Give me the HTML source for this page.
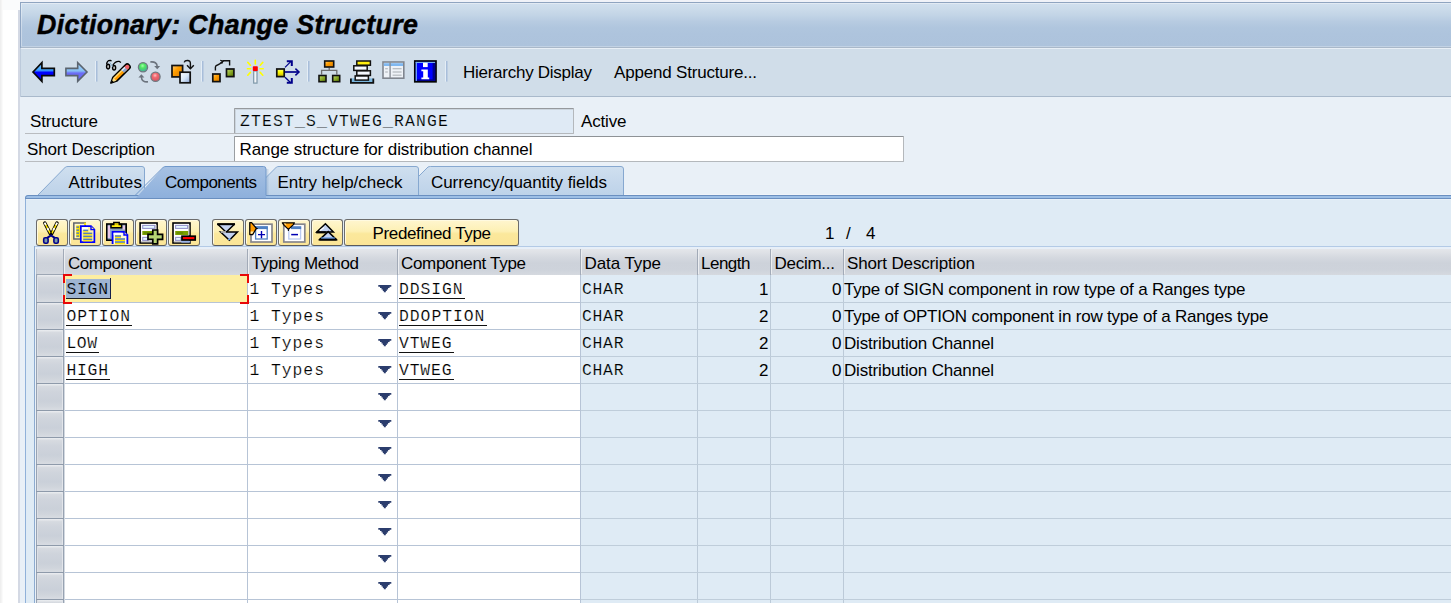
<!DOCTYPE html>
<html lang="en"><head><meta charset="utf-8"><title>Dictionary: Change Structure</title>
<style>
html,body{margin:0;padding:0;background:#fff;}
body{width:1451px;height:603px;position:relative;overflow:hidden;font-family:"Liberation Sans",sans-serif;}
#app div,#app span,#app svg.ov{position:absolute;}
#app{position:absolute;left:0;top:0;width:1451px;height:603px;overflow:hidden;}
svg.ov{left:0;top:0;pointer-events:none;}
.grp{left:0;top:0;width:0;height:0;}
span{white-space:pre;color:#000;}
.s{font-family:"Liberation Sans",sans-serif;}
.m{font-family:"Liberation Mono",monospace;}
.btn{box-sizing:border-box;border:1px solid #6c6c6c;border-bottom-color:#5a5a5c;border-radius:3px;background:linear-gradient(to bottom,#fff6cf 0%,#fdf0b4 45%,#fbe89c 55%,#fbe597 100%);box-shadow:inset 1px 1px 0 #fffae0;}
</style></head>
<body><div id="app">
<div class="grp" id="window-chrome">
<div style="left:0px;top:0px;width:3px;height:603px;background:linear-gradient(to right,#ededed,#f4f4f4 50%,#fdfdfd);"></div>
<div style="left:18px;top:10px;width:2px;height:593px;background:#d4d9e4;"></div>
<div style="left:3px;top:0px;width:17px;height:10px;background:#fafbfc;"></div>
<div style="left:20px;top:0px;width:1431px;height:2px;background:#f0f2f8;"></div>
<div style="left:20px;top:2px;width:1431px;height:1px;background:#8fa4c0;"></div>
<div style="left:20px;top:3px;width:1px;height:45px;background:#8fa6c4;"></div>
<div style="left:20px;top:48px;width:1px;height:49px;background:#bccadb;"></div>
<div style="left:20px;top:97px;width:1px;height:506px;background:#e9f0f7;"></div>
<div style="left:21px;top:3px;width:1430px;height:1px;background:#e2eaf3;"></div>
<div style="left:21px;top:4px;width:1430px;height:42px;background:linear-gradient(to bottom,#d0dfee 0%,#cbdbea 12%,#c2d4e6 27%,#b7cbe1 42%,#b0c6de 56%,#aec4dd 70%,#adc3dc 100%);"></div>
<div style="left:21px;top:4px;width:1px;height:42px;background:rgba(255,255,255,.35);"></div>
<div style="left:21px;top:46px;width:1430px;height:1px;background:#c2d2e4;"></div>
<div style="left:21px;top:47px;width:1430px;height:1px;background:#a9b8c9;"></div>
<div style="left:21px;top:48px;width:1430px;height:1px;background:#e8eff6;"></div>
<div style="left:21px;top:49px;width:1430px;height:47px;background:#d0dde9;"></div>
<div style="left:21px;top:96px;width:1430px;height:1px;background:#a9b9cb;"></div>
<div style="left:21px;top:97px;width:1430px;height:506px;background:#e9f0f7;"></div>
<span class="s" style="left:37px;top:10.00px;font-size:26.8px;line-height:30px;letter-spacing:0.323px;font-weight:bold;font-style:italic;-webkit-text-stroke:0.45px #000;">Dictionary: Change Structure</span>
<span class="s" style="left:463px;top:63.00px;font-size:17px;line-height:19px;letter-spacing:-0.263px;">Hierarchy Display</span>
<span class="s" style="left:614px;top:63.00px;font-size:17px;line-height:19px;letter-spacing:-0.193px;">Append Structure...</span>
</div>
<div class="grp" id="header-fields">
<span class="s" style="left:30px;top:112.00px;font-size:17px;line-height:19px;letter-spacing:-0.122px;">Structure</span>
<div style="left:25px;top:133px;width:209px;height:1px;background:#b9bcc0;"></div>
<div style="left:234px;top:108px;width:340px;height:26px;background:#dfeaf5;border:1px solid #b4b8bc;border-top-color:#96999d;border-left-color:#a0a4a8;box-sizing:border-box;border-radius:1px;box-shadow:inset 1px 1px 0 #ccd5de;"></div>
<span class="m" style="left:240px;top:112.00px;font-size:16.4px;line-height:19px;letter-spacing:1.168px;-webkit-text-stroke:0.18px #dfeaf5;">ZTEST_S_VTWEG_RANGE</span>
<span class="s" style="left:581px;top:112.00px;font-size:17px;line-height:19px;letter-spacing:-0.159px;">Active</span>
<span class="s" style="left:27px;top:140.00px;font-size:17px;line-height:19px;letter-spacing:-0.150px;">Short Description</span>
<div style="left:25px;top:161px;width:209px;height:1px;background:#b9bcc0;"></div>
<div style="left:234px;top:136px;width:670px;height:26px;background:#fff;border:1px solid #b4b8bc;border-top-color:#8e9296;border-left-color:#9a9ea2;box-sizing:border-box;border-radius:1px;"></div>
<span class="s" style="left:239.5px;top:140.00px;font-size:17px;line-height:19px;letter-spacing:-0.096px;">Range structure for distribution channel</span>
</div>
<div class="grp" id="tabstrip">
<svg class="ov" width="1451" height="603" viewBox="0 0 1451 603">
<defs>
<linearGradient id="tabi" x1="0" y1="0" x2="0" y2="1"><stop offset="0" stop-color="#cfdfef"/><stop offset="1" stop-color="#bdd2e9"/></linearGradient>
<linearGradient id="tsh" x1="0" y1="0" x2="1" y2="0"><stop offset="0" stop-color="#6f8fb8" stop-opacity=".35"/><stop offset="1" stop-color="#6f8fb8" stop-opacity="0"/></linearGradient>
<linearGradient id="taba" x1="0" y1="0" x2="0" y2="1"><stop offset="0" stop-color="#a6c1e3"/><stop offset="1" stop-color="#8eb0dc"/></linearGradient>
</defs>
<path d="M399.5,195.5 L428,167 Q429,166.5 430.5,166.5 L621.0,166.5 Q623.5,166.5 623.5,169 L623.5,195.5 Z" fill="url(#tabi)" stroke="#86a8d0" stroke-width="1"/>
<path d="M248,195.5 L276.5,167 Q277.5,166.5 279.0,166.5 L416.0,166.5 Q418.5,166.5 418.5,169 L418.5,195.5 Z" fill="url(#tabi)" stroke="#86a8d0" stroke-width="1"/>
<path d="M37.5,195.5 L65.5,167 Q66.5,166.5 68.0,166.5 L142.0,166.5 Q144.5,166.5 144.5,169 L144.5,195.5 Z" fill="url(#tabi)" stroke="#86a8d0" stroke-width="1"/>
<rect x="624" y="194" width="1451" height="1" fill="#f0f4f9"/>
<path d="M25,199 L25,198 Q25,195 28,195 L1451,195 L1451,199 Z" fill="#9dbfe6"/>
<path d="M25.5,199 L25.5,198 Q25.5,195.5 28,195.5 L1451,195.5" fill="none" stroke="#6a8fc0" stroke-width="1"/>
<rect x="26" y="198" width="1451" height="1" fill="#6a8fc0"/>
<path d="M136,198 L163.5,167 Q164.5,166.5 166,166.5 L263.5,166.5 Q266,166.5 266,169 L266,198 Z" fill="url(#taba)"/>
<path d="M135,195.5 L163.5,167 Q164.5,166.5 166,166.5 L263.5,166.5 Q266,166.5 266,169 L266,195.5" fill="none" stroke="#7199cb" stroke-width="1"/>
<rect x="266.5" y="169" width="3" height="26" fill="url(#tsh)"/>
</svg>
<span class="s" style="left:68.5px;top:173.00px;font-size:17px;line-height:19px;letter-spacing:0.188px;">Attributes</span>
<span class="s" style="left:165px;top:173.00px;font-size:17px;line-height:19px;letter-spacing:-0.488px;">Components</span>
<span class="s" style="left:277.5px;top:173.00px;font-size:17px;line-height:19px;letter-spacing:-0.045px;">Entry help/check</span>
<span class="s" style="left:431px;top:173.00px;font-size:17px;line-height:19px;letter-spacing:-0.071px;">Currency/quantity fields</span>
<div style="left:25px;top:199px;width:1426px;height:404px;background:#dfebf5;"></div>
<div style="left:26px;top:199px;width:1425px;height:1px;background:#e8f0f8;"></div>
<div style="left:25px;top:199px;width:1px;height:404px;background:#90b1d9;"></div>
</div>
<div class="grp" id="table-toolbar">
<div class="btn" style="left:36px;top:219px;width:32px;height:27px"></div>
<div class="btn" style="left:69px;top:219px;width:32px;height:27px"></div>
<div class="btn" style="left:102px;top:219px;width:32px;height:27px"></div>
<div class="btn" style="left:135px;top:219px;width:32px;height:27px"></div>
<div class="btn" style="left:168px;top:219px;width:32px;height:27px"></div>
<div class="btn" style="left:212px;top:219px;width:32px;height:27px"></div>
<div class="btn" style="left:245px;top:219px;width:32px;height:27px"></div>
<div class="btn" style="left:278px;top:219px;width:32px;height:27px"></div>
<div class="btn" style="left:311px;top:219px;width:32px;height:27px"></div>
<div class="btn" style="left:344px;top:219px;width:175px;height:27px"></div>
<span class="s" style="left:372.5px;top:224.00px;font-size:17px;line-height:19px;letter-spacing:-0.357px;">Predefined Type</span>
<span class="s" style="left:825px;top:224.00px;font-size:17px;line-height:19px;">1</span>
<span class="s" style="left:846px;top:224.00px;font-size:17px;line-height:19px;">/</span>
<span class="s" style="left:866px;top:224.00px;font-size:17px;line-height:19px;">4</span>
</div>
<div class="grp" id="table-control">
<div style="left:34px;top:246px;width:1417px;height:1px;background:#b3cae6;"></div>
<div style="left:35px;top:247px;width:1416px;height:2px;background:#e7eff8;"></div>
<div style="left:34px;top:246px;width:1px;height:357px;background:#8dabd0;"></div>
<div style="left:35px;top:248px;width:1px;height:355px;background:#e9f1f9;"></div>
<div style="left:36px;top:249px;width:1415px;height:26px;background:linear-gradient(to bottom,#e4e6ea 0%,#dee1e6 14%,#d4d8df 34%,#cdd2da 55%,#ced3db 80%,#d5d9df 100%);"></div>
<div style="left:64px;top:275px;width:517px;height:328px;background:#fff;"></div>
<div style="left:63px;top:249px;width:1px;height:26px;background:#a2aab7;"></div>
<div style="left:64px;top:250px;width:1px;height:24px;background:#eceef1;"></div>
<div style="left:247px;top:249px;width:1px;height:26px;background:#a2aab7;"></div>
<div style="left:248px;top:250px;width:1px;height:24px;background:#eceef1;"></div>
<div style="left:397px;top:249px;width:1px;height:26px;background:#a2aab7;"></div>
<div style="left:398px;top:250px;width:1px;height:24px;background:#eceef1;"></div>
<div style="left:580px;top:249px;width:1px;height:26px;background:#a2aab7;"></div>
<div style="left:581px;top:250px;width:1px;height:24px;background:#eceef1;"></div>
<div style="left:697px;top:249px;width:1px;height:26px;background:#a2aab7;"></div>
<div style="left:698px;top:250px;width:1px;height:24px;background:#eceef1;"></div>
<div style="left:770px;top:249px;width:1px;height:26px;background:#a2aab7;"></div>
<div style="left:771px;top:250px;width:1px;height:24px;background:#eceef1;"></div>
<div style="left:843px;top:249px;width:1px;height:26px;background:#a2aab7;"></div>
<div style="left:844px;top:250px;width:1px;height:24px;background:#eceef1;"></div>
<div style="left:247px;top:275px;width:1px;height:328px;background:#b7c4d6;"></div>
<div style="left:397px;top:275px;width:1px;height:328px;background:#b7c4d6;"></div>
<div style="left:580px;top:275px;width:1px;height:328px;background:#b7c4d6;"></div>
<div style="left:697px;top:275px;width:1px;height:328px;background:#bccad8;"></div>
<div style="left:770px;top:275px;width:1px;height:328px;background:#bccad8;"></div>
<div style="left:843px;top:275px;width:1px;height:328px;background:#bccad8;"></div>
<div style="left:36px;top:275px;width:28px;height:328px;background:#cbd1da;"></div>
<div style="left:36px;top:249px;width:1px;height:26px;background:#bcc3cd;"></div>
<div style="left:36px;top:275px;width:1px;height:328px;background:#98a3b2;"></div>
<div style="left:63px;top:275px;width:1px;height:328px;background:#98a3b2;"></div>
<div style="left:64px;top:275px;width:1px;height:328px;background:#d3d9e1;"></div>
<div style="left:65px;top:302px;width:516px;height:1px;background:#b7c4d6;"></div>
<div style="left:581px;top:302px;width:870px;height:1px;background:#bfcdda;"></div>
<div style="left:36px;top:302px;width:28px;height:1px;background:#8e9aaa;"></div>
<div style="left:65px;top:329px;width:516px;height:1px;background:#b7c4d6;"></div>
<div style="left:581px;top:329px;width:870px;height:1px;background:#bfcdda;"></div>
<div style="left:36px;top:329px;width:28px;height:1px;background:#8e9aaa;"></div>
<div style="left:65px;top:356px;width:516px;height:1px;background:#b7c4d6;"></div>
<div style="left:581px;top:356px;width:870px;height:1px;background:#bfcdda;"></div>
<div style="left:36px;top:356px;width:28px;height:1px;background:#8e9aaa;"></div>
<div style="left:65px;top:383px;width:516px;height:1px;background:#b7c4d6;"></div>
<div style="left:581px;top:383px;width:870px;height:1px;background:#bfcdda;"></div>
<div style="left:36px;top:383px;width:28px;height:1px;background:#8e9aaa;"></div>
<div style="left:65px;top:410px;width:516px;height:1px;background:#b7c4d6;"></div>
<div style="left:581px;top:410px;width:870px;height:1px;background:#bfcdda;"></div>
<div style="left:36px;top:410px;width:28px;height:1px;background:#8e9aaa;"></div>
<div style="left:65px;top:437px;width:516px;height:1px;background:#b7c4d6;"></div>
<div style="left:581px;top:437px;width:870px;height:1px;background:#bfcdda;"></div>
<div style="left:36px;top:437px;width:28px;height:1px;background:#8e9aaa;"></div>
<div style="left:65px;top:464px;width:516px;height:1px;background:#b7c4d6;"></div>
<div style="left:581px;top:464px;width:870px;height:1px;background:#bfcdda;"></div>
<div style="left:36px;top:464px;width:28px;height:1px;background:#8e9aaa;"></div>
<div style="left:65px;top:491px;width:516px;height:1px;background:#b7c4d6;"></div>
<div style="left:581px;top:491px;width:870px;height:1px;background:#bfcdda;"></div>
<div style="left:36px;top:491px;width:28px;height:1px;background:#8e9aaa;"></div>
<div style="left:65px;top:518px;width:516px;height:1px;background:#b7c4d6;"></div>
<div style="left:581px;top:518px;width:870px;height:1px;background:#bfcdda;"></div>
<div style="left:36px;top:518px;width:28px;height:1px;background:#8e9aaa;"></div>
<div style="left:65px;top:545px;width:516px;height:1px;background:#b7c4d6;"></div>
<div style="left:581px;top:545px;width:870px;height:1px;background:#bfcdda;"></div>
<div style="left:36px;top:545px;width:28px;height:1px;background:#8e9aaa;"></div>
<div style="left:65px;top:572px;width:516px;height:1px;background:#b7c4d6;"></div>
<div style="left:581px;top:572px;width:870px;height:1px;background:#bfcdda;"></div>
<div style="left:36px;top:572px;width:28px;height:1px;background:#8e9aaa;"></div>
<div style="left:65px;top:599px;width:516px;height:1px;background:#b7c4d6;"></div>
<div style="left:581px;top:599px;width:870px;height:1px;background:#bfcdda;"></div>
<div style="left:36px;top:599px;width:28px;height:1px;background:#8e9aaa;"></div>
<div style="left:36px;top:274px;width:28px;height:1px;background:#9ca6b3;"></div>
<div style="left:37px;top:275px;width:26px;height:27px;background:linear-gradient(to bottom,#eceef1 0%,#d6dae0 10%,#cfd4dc 30%,#cad0d9 65%,#d0d5dc 85%,#d8dce2 100%);border-left:1px solid #dde0e6;border-right:1px solid #e2e5ea;box-sizing:border-box;"></div>
<div style="left:37px;top:303px;width:26px;height:26px;background:linear-gradient(to bottom,#eceef1 0%,#d6dae0 10%,#cfd4dc 30%,#cad0d9 65%,#d0d5dc 85%,#d8dce2 100%);border-left:1px solid #dde0e6;border-right:1px solid #e2e5ea;box-sizing:border-box;"></div>
<div style="left:37px;top:330px;width:26px;height:26px;background:linear-gradient(to bottom,#eceef1 0%,#d6dae0 10%,#cfd4dc 30%,#cad0d9 65%,#d0d5dc 85%,#d8dce2 100%);border-left:1px solid #dde0e6;border-right:1px solid #e2e5ea;box-sizing:border-box;"></div>
<div style="left:37px;top:357px;width:26px;height:26px;background:linear-gradient(to bottom,#eceef1 0%,#d6dae0 10%,#cfd4dc 30%,#cad0d9 65%,#d0d5dc 85%,#d8dce2 100%);border-left:1px solid #dde0e6;border-right:1px solid #e2e5ea;box-sizing:border-box;"></div>
<div style="left:37px;top:384px;width:26px;height:26px;background:linear-gradient(to bottom,#eceef1 0%,#d6dae0 10%,#cfd4dc 30%,#cad0d9 65%,#d0d5dc 85%,#d8dce2 100%);border-left:1px solid #dde0e6;border-right:1px solid #e2e5ea;box-sizing:border-box;"></div>
<div style="left:37px;top:411px;width:26px;height:26px;background:linear-gradient(to bottom,#eceef1 0%,#d6dae0 10%,#cfd4dc 30%,#cad0d9 65%,#d0d5dc 85%,#d8dce2 100%);border-left:1px solid #dde0e6;border-right:1px solid #e2e5ea;box-sizing:border-box;"></div>
<div style="left:37px;top:438px;width:26px;height:26px;background:linear-gradient(to bottom,#eceef1 0%,#d6dae0 10%,#cfd4dc 30%,#cad0d9 65%,#d0d5dc 85%,#d8dce2 100%);border-left:1px solid #dde0e6;border-right:1px solid #e2e5ea;box-sizing:border-box;"></div>
<div style="left:37px;top:465px;width:26px;height:26px;background:linear-gradient(to bottom,#eceef1 0%,#d6dae0 10%,#cfd4dc 30%,#cad0d9 65%,#d0d5dc 85%,#d8dce2 100%);border-left:1px solid #dde0e6;border-right:1px solid #e2e5ea;box-sizing:border-box;"></div>
<div style="left:37px;top:492px;width:26px;height:26px;background:linear-gradient(to bottom,#eceef1 0%,#d6dae0 10%,#cfd4dc 30%,#cad0d9 65%,#d0d5dc 85%,#d8dce2 100%);border-left:1px solid #dde0e6;border-right:1px solid #e2e5ea;box-sizing:border-box;"></div>
<div style="left:37px;top:519px;width:26px;height:26px;background:linear-gradient(to bottom,#eceef1 0%,#d6dae0 10%,#cfd4dc 30%,#cad0d9 65%,#d0d5dc 85%,#d8dce2 100%);border-left:1px solid #dde0e6;border-right:1px solid #e2e5ea;box-sizing:border-box;"></div>
<div style="left:37px;top:546px;width:26px;height:26px;background:linear-gradient(to bottom,#eceef1 0%,#d6dae0 10%,#cfd4dc 30%,#cad0d9 65%,#d0d5dc 85%,#d8dce2 100%);border-left:1px solid #dde0e6;border-right:1px solid #e2e5ea;box-sizing:border-box;"></div>
<div style="left:37px;top:573px;width:26px;height:26px;background:linear-gradient(to bottom,#eceef1 0%,#d6dae0 10%,#cfd4dc 30%,#cad0d9 65%,#d0d5dc 85%,#d8dce2 100%);border-left:1px solid #dde0e6;border-right:1px solid #e2e5ea;box-sizing:border-box;"></div>
<div style="left:37px;top:600px;width:26px;height:26px;background:linear-gradient(to bottom,#eceef1 0%,#d6dae0 10%,#cfd4dc 30%,#cad0d9 65%,#d0d5dc 85%,#d8dce2 100%);border-left:1px solid #dde0e6;border-right:1px solid #e2e5ea;box-sizing:border-box;"></div>
<span class="s" style="left:68px;top:254.00px;font-size:17px;line-height:19px;letter-spacing:-0.486px;">Component</span>
<span class="s" style="left:251.5px;top:254.00px;font-size:17px;line-height:19px;letter-spacing:-0.335px;">Typing Method</span>
<span class="s" style="left:401px;top:254.00px;font-size:17px;line-height:19px;letter-spacing:-0.320px;">Component Type</span>
<span class="s" style="left:584.5px;top:254.00px;font-size:17px;line-height:19px;letter-spacing:-0.085px;">Data Type</span>
<span class="s" style="left:701px;top:254.00px;font-size:17px;line-height:19px;letter-spacing:-0.499px;">Length</span>
<span class="s" style="left:774.5px;top:254.00px;font-size:17px;line-height:19px;letter-spacing:-0.263px;">Decim...</span>
<span class="s" style="left:847px;top:254.00px;font-size:17px;line-height:19px;letter-spacing:-0.150px;">Short Description</span>
<div style="left:65px;top:275px;width:182px;height:27px;background:#fdeea1;"></div>
<div style="left:65.5px;top:278.5px;width:44px;height:19.5px;background:#9fb5d3;"></div>
<div style="left:109.5px;top:278px;width:1.5px;height:20.5px;background:#16204a;"></div>
<div style="left:63px;top:274px;width:9px;height:2px;background:#e80808;"></div>
<div style="left:63px;top:274px;width:2px;height:9px;background:#e80808;"></div>
<div style="left:63px;top:302px;width:9px;height:2px;background:#e80808;"></div>
<div style="left:63px;top:295px;width:2px;height:9px;background:#e80808;"></div>
<div style="left:240px;top:274px;width:9px;height:2px;background:#e80808;"></div>
<div style="left:247px;top:274px;width:2px;height:9px;background:#e80808;"></div>
<div style="left:240px;top:302px;width:9px;height:2px;background:#e80808;"></div>
<div style="left:247px;top:295px;width:2px;height:9px;background:#e80808;"></div>
<span class="m" style="left:66.5px;top:280.00px;font-size:16.4px;line-height:19px;letter-spacing:0.712px;-webkit-text-stroke:0.18px #9fb5d3;">SIGN</span>
<span class="m" style="left:249.5px;top:280.00px;font-size:16.4px;line-height:19px;letter-spacing:0.935px;-webkit-text-stroke:0.18px #fff;">1 Types</span>
<span class="m" style="left:399px;top:280.00px;font-size:16.4px;line-height:19px;letter-spacing:0.890px;-webkit-text-stroke:0.18px #fff;">DDSIGN</span>
<div style="left:398.5px;top:298px;width:66px;height:1.4px;background:#111;"></div>
<span class="m" style="left:582px;top:280.00px;font-size:16.4px;line-height:19px;letter-spacing:0.712px;-webkit-text-stroke:0.18px #dfebf5;">CHAR</span>
<span class="s" style="left:759px;top:280.00px;font-size:17px;line-height:19px;">1</span>
<span class="s" style="left:832px;top:280.00px;font-size:17px;line-height:19px;">0</span>
<span class="s" style="left:844px;top:280.00px;font-size:17px;line-height:19px;letter-spacing:-0.191px;">Type of SIGN component in row type of a Ranges type</span>
<span class="m" style="left:66.5px;top:307.00px;font-size:16.4px;line-height:19px;letter-spacing:0.890px;-webkit-text-stroke:0.18px #fff;">OPTION</span>
<div style="left:66px;top:325px;width:66px;height:1.4px;background:#111;"></div>
<span class="m" style="left:249.5px;top:307.00px;font-size:16.4px;line-height:19px;letter-spacing:0.935px;-webkit-text-stroke:0.18px #fff;">1 Types</span>
<span class="m" style="left:399px;top:307.00px;font-size:16.4px;line-height:19px;letter-spacing:0.967px;-webkit-text-stroke:0.18px #fff;">DDOPTION</span>
<div style="left:398.5px;top:325px;width:88px;height:1.4px;background:#111;"></div>
<span class="m" style="left:582px;top:307.00px;font-size:16.4px;line-height:19px;letter-spacing:0.712px;-webkit-text-stroke:0.18px #dfebf5;">CHAR</span>
<span class="s" style="left:759px;top:307.00px;font-size:17px;line-height:19px;">2</span>
<span class="s" style="left:832px;top:307.00px;font-size:17px;line-height:19px;">0</span>
<span class="s" style="left:844px;top:307.00px;font-size:17px;line-height:19px;letter-spacing:-0.196px;">Type of OPTION component in row type of a Ranges type</span>
<span class="m" style="left:66.5px;top:334.00px;font-size:16.4px;line-height:19px;letter-spacing:0.488px;-webkit-text-stroke:0.18px #fff;">LOW</span>
<div style="left:66px;top:352px;width:33px;height:1.4px;background:#111;"></div>
<span class="m" style="left:249.5px;top:334.00px;font-size:16.4px;line-height:19px;letter-spacing:0.935px;-webkit-text-stroke:0.18px #fff;">1 Types</span>
<span class="m" style="left:399px;top:334.00px;font-size:16.4px;line-height:19px;letter-spacing:0.823px;-webkit-text-stroke:0.18px #fff;">VTWEG</span>
<div style="left:398.5px;top:352px;width:55px;height:1.4px;background:#111;"></div>
<span class="m" style="left:582px;top:334.00px;font-size:16.4px;line-height:19px;letter-spacing:0.712px;-webkit-text-stroke:0.18px #dfebf5;">CHAR</span>
<span class="s" style="left:759px;top:334.00px;font-size:17px;line-height:19px;">2</span>
<span class="s" style="left:832px;top:334.00px;font-size:17px;line-height:19px;">0</span>
<span class="s" style="left:844px;top:334.00px;font-size:17px;line-height:19px;letter-spacing:-0.163px;">Distribution Channel</span>
<span class="m" style="left:66.5px;top:361.00px;font-size:16.4px;line-height:19px;letter-spacing:0.712px;-webkit-text-stroke:0.18px #fff;">HIGH</span>
<div style="left:66px;top:379px;width:44px;height:1.4px;background:#111;"></div>
<span class="m" style="left:249.5px;top:361.00px;font-size:16.4px;line-height:19px;letter-spacing:0.935px;-webkit-text-stroke:0.18px #fff;">1 Types</span>
<span class="m" style="left:399px;top:361.00px;font-size:16.4px;line-height:19px;letter-spacing:0.823px;-webkit-text-stroke:0.18px #fff;">VTWEG</span>
<div style="left:398.5px;top:379px;width:55px;height:1.4px;background:#111;"></div>
<span class="m" style="left:582px;top:361.00px;font-size:16.4px;line-height:19px;letter-spacing:0.712px;-webkit-text-stroke:0.18px #dfebf5;">CHAR</span>
<span class="s" style="left:759px;top:361.00px;font-size:17px;line-height:19px;">2</span>
<span class="s" style="left:832px;top:361.00px;font-size:17px;line-height:19px;">0</span>
<span class="s" style="left:844px;top:361.00px;font-size:17px;line-height:19px;letter-spacing:-0.163px;">Distribution Channel</span>
<div style="left:66px;top:298px;width:44px;height:1.2px;background:#222;"></div>
<svg class="ov" width="1451" height="603" viewBox="0 0 1451 603">
<path d="M378.3,285 H391.3 V286.7 H389.6 V288.1 H388.1 V289.6 H386.8 V291 H385.8 V292.3 H383.8 V291 H382.8 V289.6 H381.5 V288.1 H380 V286.7 H378.3 Z" fill="#2b3d6d"/>
<path d="M378.3,312 H391.3 V313.7 H389.6 V315.1 H388.1 V316.6 H386.8 V318 H385.8 V319.3 H383.8 V318 H382.8 V316.6 H381.5 V315.1 H380 V313.7 H378.3 Z" fill="#2b3d6d"/>
<path d="M378.3,339 H391.3 V340.7 H389.6 V342.1 H388.1 V343.6 H386.8 V345 H385.8 V346.3 H383.8 V345 H382.8 V343.6 H381.5 V342.1 H380 V340.7 H378.3 Z" fill="#2b3d6d"/>
<path d="M378.3,366 H391.3 V367.7 H389.6 V369.1 H388.1 V370.6 H386.8 V372 H385.8 V373.3 H383.8 V372 H382.8 V370.6 H381.5 V369.1 H380 V367.7 H378.3 Z" fill="#2b3d6d"/>
<path d="M378.3,393 H391.3 V394.7 H389.6 V396.1 H388.1 V397.6 H386.8 V399 H385.8 V400.3 H383.8 V399 H382.8 V397.6 H381.5 V396.1 H380 V394.7 H378.3 Z" fill="#2b3d6d"/>
<path d="M378.3,420 H391.3 V421.7 H389.6 V423.1 H388.1 V424.6 H386.8 V426 H385.8 V427.3 H383.8 V426 H382.8 V424.6 H381.5 V423.1 H380 V421.7 H378.3 Z" fill="#2b3d6d"/>
<path d="M378.3,447 H391.3 V448.7 H389.6 V450.1 H388.1 V451.6 H386.8 V453 H385.8 V454.3 H383.8 V453 H382.8 V451.6 H381.5 V450.1 H380 V448.7 H378.3 Z" fill="#2b3d6d"/>
<path d="M378.3,474 H391.3 V475.7 H389.6 V477.1 H388.1 V478.6 H386.8 V480 H385.8 V481.3 H383.8 V480 H382.8 V478.6 H381.5 V477.1 H380 V475.7 H378.3 Z" fill="#2b3d6d"/>
<path d="M378.3,501 H391.3 V502.7 H389.6 V504.1 H388.1 V505.6 H386.8 V507 H385.8 V508.3 H383.8 V507 H382.8 V505.6 H381.5 V504.1 H380 V502.7 H378.3 Z" fill="#2b3d6d"/>
<path d="M378.3,528 H391.3 V529.7 H389.6 V531.1 H388.1 V532.6 H386.8 V534 H385.8 V535.3 H383.8 V534 H382.8 V532.6 H381.5 V531.1 H380 V529.7 H378.3 Z" fill="#2b3d6d"/>
<path d="M378.3,555 H391.3 V556.7 H389.6 V558.1 H388.1 V559.6 H386.8 V561 H385.8 V562.3 H383.8 V561 H382.8 V559.6 H381.5 V558.1 H380 V556.7 H378.3 Z" fill="#2b3d6d"/>
<path d="M378.3,582 H391.3 V583.7 H389.6 V585.1 H388.1 V586.6 H386.8 V588 H385.8 V589.3 H383.8 V588 H382.8 V586.6 H381.5 V585.1 H380 V583.7 H378.3 Z" fill="#2b3d6d"/>
</svg>
</div>
<div class="grp" id="app-toolbar-icons">
<svg class="ov" width="1451" height="603" viewBox="0 0 1451 603">
<defs>
<linearGradient id="gback" x1="0" y1="61" x2="0" y2="83" gradientUnits="userSpaceOnUse"><stop offset="0" stop-color="#9fd8ff"/><stop offset=".42" stop-color="#3aa0ff"/><stop offset=".52" stop-color="#0000ff"/><stop offset=".8" stop-color="#0000f0"/><stop offset="1" stop-color="#000090"/></linearGradient>
<linearGradient id="gfwd" x1="0" y1="61" x2="0" y2="83" gradientUnits="userSpaceOnUse"><stop offset="0" stop-color="#a8d4f6"/><stop offset=".45" stop-color="#86c0f6"/><stop offset=".55" stop-color="#6c6cf6"/><stop offset="1" stop-color="#6a6af0"/></linearGradient>
<linearGradient id="gor" x1="0" y1="0" x2="1" y2="1"><stop offset="0" stop-color="#ffd080"/><stop offset=".4" stop-color="#ff9e00"/><stop offset="1" stop-color="#d87800"/></linearGradient>
<linearGradient id="gwb" x1="0" y1="0" x2="1" y2="1"><stop offset="0" stop-color="#ffffff"/><stop offset=".5" stop-color="#d8e8f8"/><stop offset="1" stop-color="#8ea8d8"/></linearGradient>
<linearGradient id="ggr" x1="0" y1="0" x2="1" y2="1"><stop offset="0" stop-color="#c8dc78"/><stop offset=".5" stop-color="#8aaa28"/><stop offset="1" stop-color="#506c00"/></linearGradient>
<linearGradient id="gye" x1="0" y1="0" x2="0" y2="1"><stop offset="0" stop-color="#ffff80"/><stop offset=".4" stop-color="#ffff00"/><stop offset="1" stop-color="#c8b000"/></linearGradient>
<radialGradient id="ggreen" cx=".45" cy=".35" r=".7"><stop offset="0" stop-color="#a0ffb0"/><stop offset=".35" stop-color="#50e860"/><stop offset="1" stop-color="#40a0a8"/></radialGradient>
<radialGradient id="gred" cx=".45" cy=".35" r=".7"><stop offset="0" stop-color="#ffc0c0"/><stop offset=".35" stop-color="#f06870"/><stop offset="1" stop-color="#d05060"/></radialGradient>
</defs>
<rect x="95" y="61" width="1.2" height="20.6" fill="#e4edf6"/><rect x="96.2" y="61" width="1.2" height="20.6" fill="#9db6d6"/>
<rect x="201" y="61" width="1.2" height="20.6" fill="#e4edf6"/><rect x="202.2" y="61" width="1.2" height="20.6" fill="#9db6d6"/>
<rect x="307" y="61" width="1.2" height="20.6" fill="#e4edf6"/><rect x="308.2" y="61" width="1.2" height="20.6" fill="#9db6d6"/>
<rect x="445" y="61" width="1.2" height="20.6" fill="#e4edf6"/><rect x="446.2" y="61" width="1.2" height="20.6" fill="#9db6d6"/>
<path d="M33,72 L41.9,62.6 L41.9,68.4 L54.3,68.4 L54.3,75.6 L41.9,75.6 L41.9,81.4 Z" fill="url(#gback)" stroke="#0a0a0a" stroke-width="1.7" stroke-linejoin="miter"/>
<path d="M65.9,68.4 L77.7,68.4 L77.7,62.6 L87,72 L77.7,81.4 L77.7,75.6 L65.9,75.6 Z" fill="url(#gfwd)" stroke="#5b646f" stroke-width="1.6" stroke-linejoin="miter"/>
<g transform="translate(110.9,83) rotate(-44.5)"><path d="M0,0 L5.5,-2.7 L23.5,-2.7 Q25.6,-2.7 25.6,0 Q25.6,2.7 23.5,2.7 L5.5,2.7 Z" fill="#ff9c00" stroke="#000" stroke-width="1.6" stroke-linejoin="round"/><path d="M0.6,0 L5.5,-2.1 L5.5,2.1 Z" fill="#f6dc8a"/><path d="M-0.4,0 L2.8,-1.6 L2.8,1.6 Z" fill="#000"/><rect x="5.5" y="-2" width="11" height="1.5" fill="#ffd870"/><rect x="16.5" y="-2" width="4.6" height="4" fill="#8aa4cf"/><rect x="16.5" y="-2" width="4.6" height="1.4" fill="#e6eef8"/><path d="M21.1,-2 H23.4 Q24.8,-2 24.8,0 Q24.8,2 23.4,2 H21.1 Z" fill="#ee6070"/></g>
<ellipse cx="108.1" cy="66.6" rx="1.5" ry="2.3" fill="#e4e4e4" stroke="#000" stroke-width="1.5"/><ellipse cx="114.1" cy="67.8" rx="1.5" ry="2.3" fill="#e4e4e4" stroke="#000" stroke-width="1.5"/><path d="M106.6,64.4 Q107,60.2 110.4,60.4 L111.6,61" fill="none" stroke="#000" stroke-width="1.3"/><path d="M112.8,65.4 Q115.2,61 119.2,61.4 L121,62.4" fill="none" stroke="#000" stroke-width="1.2"/><path d="M109.8,62.6 L112.6,66.6" fill="none" stroke="#78a8c8" stroke-width=".9"/>
<circle cx="143" cy="67.2" r="4.6" fill="url(#ggreen)" stroke="#70787f" stroke-width="1.3"/><circle cx="155.5" cy="76.8" r="4.6" fill="url(#gred)" stroke="#70787f" stroke-width="1.3"/><path d="M150.3,62 Q157,61.3 157.2,66.5" fill="none" stroke="#6b737d" stroke-width="1.6"/><path d="M154.2,66 L157.2,69.3 L160.2,66 Z" fill="#6b737d"/><path d="M148,81.8 Q141.6,82.2 141.4,77" fill="none" stroke="#6b737d" stroke-width="1.6"/><path d="M138.4,77.6 L141.4,74.3 L144.4,77.6 Z" fill="#6b737d"/>
<rect x="172" y="65.5" width="10.6" height="11.4" fill="url(#gor)" stroke="#111" stroke-width="1.7"/><rect x="180" y="72.2" width="10.2" height="10.6" fill="url(#gwb)" stroke="#111" stroke-width="1.7"/><path d="M184.2,62.4 Q184.8,60.4 187.5,60.5 Q190.5,60.6 190.4,63.5 L190.4,68.5" fill="none" stroke="#111" stroke-width="1.4"/><path d="M187,65.2 L190.4,68.8 L193.8,65.2" fill="none" stroke="#111" stroke-width="1.4"/>
<rect x="212.8" y="74" width="7.2" height="7.6" fill="url(#gor)" stroke="#111" stroke-width="1.7"/><rect x="226.5" y="69" width="7.4" height="7.6" fill="url(#ggr)" stroke="#111" stroke-width="1.7"/><path d="M215.4,70.5 L215.4,67 Q215.6,65.6 217.5,65 L220,63.6 L223.5,60.8 L229.6,60.8 L229.6,65.6" fill="none" stroke="#111" stroke-width="1.4"/><path d="M220.2,60.3 L223,61.2 L221.6,63.8" fill="none" stroke="#111" stroke-width="1.2"/>
<rect x="253.7" y="71" width="3.3" height="12.1" fill="#f4f6f8" stroke="#7d97a8" stroke-width="1.2"/><rect x="252.8" y="66.2" width="5" height="4.8" rx=".8" fill="#ff0000"/>
<line x1="255.3" y1="60.4" x2="255.3" y2="64" stroke="#ffff00" stroke-width="1.6" stroke-linecap="round"/>
<line x1="247.4" y1="68.7" x2="250.6" y2="68.7" stroke="#ffff00" stroke-width="1.6" stroke-linecap="round"/>
<line x1="260" y1="68.7" x2="263.2" y2="68.7" stroke="#ffff00" stroke-width="1.6" stroke-linecap="round"/>
<line x1="247.8" y1="62.4" x2="250.4" y2="65.2" stroke="#ffff00" stroke-width="1.6" stroke-linecap="round"/>
<line x1="262.8" y1="62.4" x2="260.2" y2="65.2" stroke="#ffff00" stroke-width="1.6" stroke-linecap="round"/>
<line x1="247.8" y1="75.2" x2="250.4" y2="72.4" stroke="#ffff00" stroke-width="1.6" stroke-linecap="round"/>
<line x1="262.8" y1="75.2" x2="260.2" y2="72.4" stroke="#ffff00" stroke-width="1.6" stroke-linecap="round"/>
<rect x="276.8" y="69" width="7.4" height="7.6" fill="url(#gye)" stroke="#111" stroke-width="1.7"/><path d="M285,72 L298.5,72" stroke="#00008a" stroke-width="1.7" fill="none"/><path d="M295.4,68.6 L299,72 L295.4,75.4" stroke="#00008a" stroke-width="1.5" fill="none"/><path d="M285,67.4 L291,61.4" stroke="#00008a" stroke-width="1.3" fill="none"/><path d="M286.8,60.2 L292.8,60.2 L292.8,66 L290.8,66 L290.8,62.2 L286.8,62.2 Z" fill="#00008a"/><path d="M285,77.2 L291,83" stroke="#00008a" stroke-width="1.3" fill="none"/><path d="M286.8,83.8 L292.8,83.8 L292.8,78 L290.8,78 L290.8,81.8 L286.8,81.8 Z" fill="#00008a"/>
<path d="M329.2,67.8 V70.4 M321.6,74.6 V70.4 H336.8 V74.6" fill="none" stroke="#6e6e6e" stroke-width="1.3"/><rect x="324.7" y="61" width="9" height="6" fill="url(#gor)" stroke="#111" stroke-width="1.6"/><rect x="319" y="75.5" width="7" height="6.2" fill="url(#ggr)" stroke="#111" stroke-width="1.6"/><rect x="332.7" y="75.5" width="7" height="6.2" fill="url(#ggr)" stroke="#111" stroke-width="1.6"/>
<path d="M350.9,78.4 V82.8 H373.3 V78.4" fill="#7ab6de" stroke="#111" stroke-width="1.8"/><rect x="355.2" y="75.9" width="13.2" height="4.2" fill="#f4f8ff" stroke="#111" stroke-width="1.5"/><rect x="356.8" y="70.8" width="13.6" height="4.6" fill="#f4f8ff" stroke="#111" stroke-width="1.5"/><rect x="353.8" y="65.8" width="13.4" height="4.6" fill="#f4f8ff" stroke="#111" stroke-width="1.5"/><rect x="356.8" y="61" width="13.6" height="4.2" fill="#ffee10" stroke="#111" stroke-width="1.5"/>
<rect x="383" y="62" width="20.8" height="16.2" fill="#eef2f7" stroke="#80868f" stroke-width="1.6"/><rect x="383.8" y="63.2" width="19.2" height="2.8" fill="#80b8f0"/><rect x="389.4" y="62" width="1.4" height="16.2" fill="#8a9098"/>
<rect x="392.6" y="68.10000000000001" width="9" height="1.2" fill="#b4b8bd"/>
<rect x="392.6" y="71.4" width="9" height="1.2" fill="#b4b8bd"/>
<rect x="392.6" y="74.60000000000001" width="9" height="1.2" fill="#b4b8bd"/>
<rect x="385.2" y="68.10000000000001" width="2.6" height="1.2" fill="#b4b8bd"/>
<rect x="385.2" y="71.4" width="2.6" height="1.2" fill="#b4b8bd"/>
<rect x="414.8" y="61" width="21.2" height="20.8" fill="#0000ff" stroke="#050505" stroke-width="1.7"/><rect x="415.7" y="61.9" width="1.2" height="19" fill="#78b0ee"/><rect x="415.7" y="61.9" width="19.4" height="1.1" fill="#78b0ee"/><rect x="432.6" y="63" width="2.6" height="18" fill="#00008e"/><rect x="417" y="79.4" width="18" height="1.6" fill="#00008e"/><rect x="423" y="62.8" width="4.7" height="4.3" fill="#fff"/><path d="M421.4,69.6 H427.8 V77.4 H429.2 V79.2 H421.4 V77.4 H423.2 V71.2 H421.4 Z" fill="#fff"/>
</svg>
</div>
<div class="grp" id="table-toolbar-icons">
<svg class="ov" width="1451" height="603" viewBox="0 0 1451 603">
<path d="M44.8,223 L50.2,233.4" stroke="#000" stroke-width="3.4" stroke-linecap="round" fill="none"/><path d="M57,223 L51.8,233.4" stroke="#000" stroke-width="3.4" stroke-linecap="round" fill="none"/><path d="M44.8,223 L50.2,233.4" stroke="#ffe600" stroke-width="1.6" fill="none"/><path d="M57,223 L51.8,233.4" stroke="#ffe600" stroke-width="1.6" fill="none"/><path d="M44.6,222.6 L45.8,225 M47.4,228 L48.6,230.4" stroke="#fff" stroke-width="1.7" fill="none"/><path d="M57.2,222.6 L56,225 M54.4,228 L53.2,230.4" stroke="#fff" stroke-width="1.7" fill="none"/><rect x="50.2" y="232.4" width="1.6" height="1.6" fill="#000"/><path d="M46.4,238.4 L51,235.4 L55.6,238.4" stroke="#00008c" stroke-width="2" fill="none" stroke-linejoin="miter"/><rect x="43.7" y="237.8" width="4.4" height="5.4" rx="1.5" fill="#7b9aa8" stroke="#00008c" stroke-width="1.6"/><rect x="53.9" y="237.8" width="4.4" height="5.4" rx="1.5" fill="#7b9aa8" stroke="#00008c" stroke-width="1.6"/>
<rect x="73.8" y="223" width="11.4" height="16" fill="#fff8d0" stroke="#60646c" stroke-width="1.5"/><rect x="76.2" y="225.4" width="4.4" height="12" fill="#ffe600"/>
<rect x="76.4" y="226.4" width="2.6" height="1.5" fill="#5a80b0"/>
<rect x="76.4" y="229.4" width="2.6" height="1.5" fill="#5a80b0"/>
<rect x="76.4" y="232.4" width="2.6" height="1.5" fill="#5a80b0"/>
<rect x="76.4" y="235.4" width="2.6" height="1.5" fill="#5a80b0"/>
<rect x="84.2" y="222.8" width="1.8" height="2.2" fill="#ffe600"/><path d="M80.8,226.2 H91 L94.4,229.6 V242.2 H80.8 Z" fill="#fff2a8" stroke="#0000ff" stroke-width="1.7"/><rect x="82" y="227.2" width="6" height="3" fill="#fff"/><path d="M91,226.2 V229.6 H94.4" fill="#ffe97a" stroke="#0000ff" stroke-width="1.4"/>
<rect x="83.2" y="229.6" width="5" height="1.6" fill="#5a80b0"/><rect x="83.2" y="231.2" width="5" height="1.2" fill="#ffe600"/>
<rect x="83.2" y="232.6" width="9" height="1.6" fill="#5a80b0"/><rect x="83.2" y="234.2" width="9" height="1.2" fill="#ffe600"/>
<rect x="83.2" y="235.6" width="9" height="1.6" fill="#5a80b0"/><rect x="83.2" y="237.2" width="9" height="1.2" fill="#ffe600"/>
<rect x="83.2" y="238.6" width="9" height="1.6" fill="#5a80b0"/><rect x="83.2" y="240.2" width="9" height="1.2" fill="#ffe600"/>
<rect x="106.8" y="224" width="19.4" height="16.2" fill="#8aa2b6" stroke="#000" stroke-width="1.6"/><rect x="107.8" y="225.6" width="2.4" height="12.4" fill="#e8c8e8"/><rect x="110.2" y="229" width="2" height="9" fill="#8ea6d8"/><rect x="122.6" y="225.6" width="2.4" height="4" fill="#e8c8e8"/><path d="M111,227.8 V224.6 H113.8 V222.6 H119.2 V224.6 H121.6 V227.8 Z" fill="#ffee10" stroke="#000" stroke-width="1.5"/><rect x="115.4" y="223.4" width="2.4" height="1.4" fill="#c8b000"/><path d="M112.6,244 V231.8 H124 L127.4,235 V244" fill="#fff8d8" stroke="#0000ff" stroke-width="1.8"/><path d="M124,231.8 V235 H127.4" fill="#ffe97a" stroke="#0000ff" stroke-width="1.4"/><rect x="113.6" y="232.8" width="8" height="2" fill="#fff"/>
<rect x="115" y="235.2" width="6" height="1.7" fill="#5a80b0"/><rect x="115" y="236.89999999999998" width="6" height="1.2" fill="#ffe600"/>
<rect x="115" y="238.2" width="10" height="1.7" fill="#5a80b0"/><rect x="115" y="239.89999999999998" width="10" height="1.2" fill="#ffe600"/>
<rect x="115" y="241.2" width="10" height="1.7" fill="#5a80b0"/><rect x="115" y="242.89999999999998" width="10" height="1.2" fill="#ffe600"/>
<rect x="140.10000000000002" y="223" width="17" height="20" fill="#fff" stroke="#000" stroke-width="1.6"/><rect x="140.9" y="241" width="15.4" height="1.3" fill="#c8c8c8"/><rect x="155.3" y="225" width="1.2" height="10" fill="#c8c8c8"/><rect x="142.70000000000002" y="225.4" width="12" height="3" fill="#e6f8ff" stroke="#9696cc" stroke-width="1.1"/><rect x="142.3" y="231" width="10" height="4" fill="#7aa000"/><rect x="143.70000000000002" y="232.2" width="6.6" height="1.6" fill="#5a7c00" opacity=".7"/><rect x="142.70000000000002" y="237.4" width="5.4" height="3" fill="#e6f8ff" stroke="#9696cc" stroke-width="1.1"/>
<path d="M152.8,230 H157.6 V234.4 H162.6 V239.4 H157.6 V243.8 H152.8 V239.4 H148 V234.4 H152.8 Z" fill="#b6d474" stroke="#000" stroke-width="1.7" stroke-linejoin="miter"/>
<rect x="173.0" y="223" width="17" height="20" fill="#fff" stroke="#000" stroke-width="1.6"/><rect x="173.79999999999998" y="241" width="15.4" height="1.3" fill="#c8c8c8"/><rect x="188.2" y="225" width="1.2" height="10" fill="#c8c8c8"/><rect x="175.6" y="225.4" width="12" height="3" fill="#e6f8ff" stroke="#9696cc" stroke-width="1.1"/><rect x="175.2" y="231" width="13" height="4" fill="#7aa000"/><rect x="176.6" y="232.2" width="6.6" height="1.6" fill="#5a7c00" opacity=".7"/><rect x="175.6" y="237.4" width="5.4" height="3" fill="#e6f8ff" stroke="#9696cc" stroke-width="1.1"/>
<rect x="181.3" y="240.6" width="9" height="2" fill="#9ab4e8"/>
<rect x="182" y="236.2" width="13.2" height="3.8" fill="#ff0000" stroke="#000" stroke-width="1.7"/>
<path d="M217.8,224.2 L234.4,224.2 L226.2,232.2 Z" fill="#c4d3f2" stroke="#000" stroke-width="1.5" stroke-linejoin="round"/>
<rect x="217.20000000000002" y="223.2" width="17.799999999999994" height="2" fill="#000"/>
<path d="M220.6,232 L237.4,232 L229.4,240.2 Z" fill="#c4d3f2" stroke="#000" stroke-width="1.5"/>
<path d="M220.8,232 L226,232" stroke="#fff" stroke-width="1.2"/><path d="M228,239.4 L230.8,239.4" stroke="#5f95e0" stroke-width="1.4"/>
<rect x="251" y="224.2" width="21" height="17.8" fill="#fff" stroke="#86868c" stroke-width="1.7"/>
<rect x="255.6" y="227" width="11.6" height="12" fill="#fff" stroke="#4f80c2" stroke-width="1.3"/><rect x="255" y="226.3" width="12.8" height="2.8" fill="#4f80c2"/><path d="M258,234.6 H265 M261.5,231 V238.2" stroke="#0000b4" stroke-width="1.4" fill="none"/><path d="M249.8,222.6 L249.8,234.6 L252.6,234.6 L256.4,228.4 L251.6,222.6 Z" fill="#ff9c00" stroke="#000" stroke-width="1.3" stroke-linejoin="round"/><path d="M250.6,231.4 L250.6,233.8 L252.2,233.8 L253.8,231.4 Z" fill="#fff0b0"/><path d="M256.4,228.4 L257.8,228.6" stroke="#000" stroke-width="1"/>
<rect x="283.8" y="224.2" width="21" height="17.8" fill="#fff" stroke="#86868c" stroke-width="1.7"/>
<rect x="288.8" y="227" width="11.8" height="12" fill="#fff" stroke="#b9c9f0" stroke-width="1.3"/><rect x="291" y="226.3" width="10.2" height="2.8" fill="#4f80c2"/><path d="M291.2,234.6 H298" stroke="#0000b4" stroke-width="1.5" fill="none"/><path d="M282.4,222.8 L294.4,222.8 L293.4,224.6 L288.4,229.4 L284.4,225.6 Z" fill="#ff9c00" stroke="#000" stroke-width="1.3" stroke-linejoin="round"/><path d="M283.6,223.6 L285.6,223.6 L286.6,225.4 Z" fill="#fff0b0"/><path d="M288.4,229.4 V231" stroke="#000" stroke-width="1.1"/>
<path d="M316.8,232 L325.4,223.8 L333.4,232 Z" fill="#c4d3f2" stroke="#000" stroke-width="1.5"/><rect x="316.2" y="231.4" width="9.6" height="2" fill="#000"/><path d="M319.8,239.4 L328.2,231.6 L336.2,239.4 Z" fill="#c4d3f2" stroke="#000" stroke-width="1.5"/><rect x="321" y="237.4" width="14" height="1.4" fill="#5f95e0"/><rect x="319.2" y="238.7" width="17.6" height="2" fill="#000"/><path d="M320,230.6 L324,227.6" stroke="#fff" stroke-width="1.2"/>
</svg>
</div>
</div></body></html>
